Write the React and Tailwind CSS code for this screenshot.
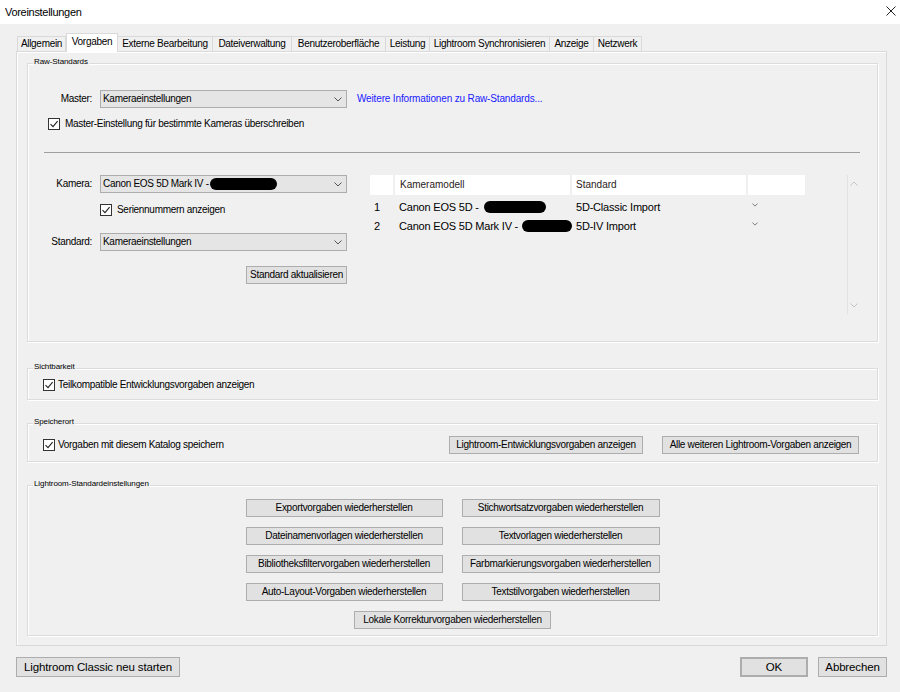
import React from "react";

const Chevron = ({ w = 8, h = 5 }) => (
  <svg width={w} height={h} viewBox="0 0 8 5" className="shrink-0">
    <path d="M0.5 0.5L4 4L7.5 0.5" fill="none" stroke="#555" strokeWidth="1" />
  </svg>
);

const Pill = ({ className }) => <span className={`inline-block h-[12px] shrink-0 rounded-full bg-black ${className}`} />;

const Select = ({ children, className = "" }) => (
  <div className={`flex h-[18px] w-[247px] items-center border border-[#adadad] bg-[#e5e5e5] pl-[2px] pr-[4px] ${className}`}>
    <div className="flex flex-1 items-center whitespace-nowrap">{children}</div>
    <Chevron />
  </div>
);

const Check = ({ children, className = "", gap = "ml-[5px]" }) => (
  <div className={`flex h-[12px] items-center ${className}`}>
    <div className="flex h-[12px] w-[12px] shrink-0 items-center justify-center border border-[#333] bg-white">
      <svg width="10" height="10" viewBox="0 0 10 10">
        <path d="M1.5 5.2L4 7.6L8.6 2.2" fill="none" stroke="#222" strokeWidth="1.1" />
      </svg>
    </div>
    <span className={`whitespace-nowrap ${gap}`}>{children}</span>
  </div>
);

const Btn = ({ children, className = "" }) => (
  <div className={`flex h-[18px] shrink-0 items-center justify-center whitespace-nowrap border border-[#adadad] bg-[#e1e1e1] ${className}`}>
    {children}
  </div>
);

const Group = ({ label, className = "", children }) => (
  <div className={`border border-[#dcdcdc] shadow-[inset_1px_1px_0_#fff,1px_1px_0_#fff] ${className}`}>
    <div className="-mt-[8px] ml-[5px] w-fit bg-[#f0f0f0] px-px text-[8px] leading-[12px] tracking-[-0.1px]">{label}</div>
    {children}
  </div>
);

const tabs = [
  ["Allgemein", "w-[49px]"],
  ["Vorgaben", "w-[52px]"],
  ["Externe Bearbeitung", "w-[95px]"],
  ["Dateiverwaltung", "w-[79px]"],
  ["Benutzeroberfläche", "w-[94px]"],
  ["Leistung", "w-[44px]"],
  ["Lightroom Synchronisieren", "w-[120px]"],
  ["Anzeige", "w-[44px]"],
  ["Netzwerk", "w-[48px]"],
];

const restore = [
  "Exportvorgaben wiederherstellen",
  "Stichwortsatzvorgaben wiederherstellen",
  "Dateinamenvorlagen wiederherstellen",
  "Textvorlagen wiederherstellen",
  "Bibliotheksfiltervorgaben wiederherstellen",
  "Farbmarkierungsvorgaben wiederherstellen",
  "Auto-Layout-Vorgaben wiederherstellen",
  "Textstilvorgaben wiederherstellen",
];

export default function App() {
  return (
    <div className="h-[692px] w-[900px] overflow-hidden bg-[#f0f0f0] font-['Liberation_Sans',Arial,sans-serif] text-[10px] leading-[12px] tracking-[-0.3px] text-black">
      {/* title bar */}
      <div className="flex h-[24px] items-center justify-between bg-white pl-[5px] pr-[4px]">
        <span className="text-[11px]">Voreinstellungen</span>
        <svg width="10" height="10" viewBox="0 0 10 10" className="mb-[2px]">
          <path d="M0.5 0.5L9.5 9.5M9.5 0.5L0.5 9.5" stroke="#222" strokeWidth="1" />
        </svg>
      </div>

      <div className="pl-[16px] pr-[13px] pt-[9px]">
        {/* tabs */}
        <div className="flex h-[18px] items-end pl-px">
          {tabs.map(([t, w]) =>
            t === "Vorgaben" ? (
              <div key={t} className={`relative z-10 -mb-px flex h-[19px] items-center justify-center whitespace-nowrap border border-b-0 border-[#d9d9d9] bg-white pb-[2px] ${w}`}>
                {t}
              </div>
            ) : (
              <div key={t} className={`flex h-[15px] items-center justify-center whitespace-nowrap border border-b-0 border-l-0 border-[#d9d9d9] first:border-l ${w}`}>
                {t}
              </div>
            )
          )}
        </div>

        {/* panel */}
        <div className="h-[595px] border border-[#d9d9d9] pl-[10px] pr-[8px] pt-[11px] shadow-[inset_1px_1px_0_#fff]">
          <Group label="Raw-Standards" className="h-[279px]">
            <div className="mt-[22px] flex items-center">
              <div className="w-[64px] text-right">Master:</div>
              <Select className="ml-[8px]">Kameraeinstellungen</Select>
              <span className="ml-[10px] tracking-[-0.15px] text-[#1a1aff]">Weitere Informationen zu Raw-Standards...</span>
            </div>
            <Check className="ml-[20px] mt-[10px]">Master-Einstellung für bestimmte Kameras überschreiben</Check>
            <div className="ml-[16px] mr-[17px] mt-[22px] h-px bg-[#a0a0a0]" />

            <div className="mt-[22px] flex">
              <div className="flex w-[319px] flex-col">
                <div className="flex items-center">
                  <div className="w-[64px] text-right">Kamera:</div>
                  <Select className="ml-[8px]">
                    Canon EOS 5D Mark IV -<Pill className="ml-[1px] w-[67px]" />
                  </Select>
                </div>
                <Check className="ml-[72px] mt-[11px]">Seriennummern anzeigen</Check>
                <div className="mt-[17px] flex items-center">
                  <div className="w-[64px] text-right">Standard:</div>
                  <Select className="ml-[8px]">Kameraeinstellungen</Select>
                </div>
                <Btn className="ml-auto mt-[15px] w-[101px]">Standard aktualisieren</Btn>
              </div>

              {/* table */}
              <div className="ml-[23px] w-[435px]">
                <div className="flex h-[20px] gap-[2px] tracking-normal text-[#2a1a1a]">
                  <div className="w-[23px] bg-white" />
                  <div className="flex w-[175px] items-center bg-white pl-[5px]">Kameramodell</div>
                  <div className="flex w-[174px] items-center bg-white pl-[4px]">Standard</div>
                  <div className="flex-1 bg-white" />
                </div>
                <div className="mt-[2px] text-[11px] tracking-[-0.2px]">
                  <div className="flex h-[19px] items-center">
                    <div className="w-[25px] pl-[4px]">1</div>
                    <div className="flex w-[177px] items-center whitespace-nowrap pl-[4px]">
                      Canon EOS 5D -<Pill className="ml-[5px] w-[62px]" />
                    </div>
                    <div className="w-[176px] pl-[4px]">5D-Classic Import</div>
                    <div className="mb-[3px] pl-[4px]"><Chevron w={6} h={4} /></div>
                  </div>
                  <div className="flex h-[19px] items-center">
                    <div className="w-[25px] pl-[4px]">2</div>
                    <div className="flex w-[177px] items-center whitespace-nowrap pl-[4px]">
                      Canon EOS 5D Mark IV -<Pill className="ml-[4px] w-[50px]" />
                    </div>
                    <div className="relative w-[176px] pl-[4px]">5D-IV Import</div>
                    <div className="mb-[3px] pl-[4px]"><Chevron w={6} h={4} /></div>
                  </div>
                </div>
              </div>

              {/* scrollbar */}
              <div className="ml-[42px] flex h-[139px] w-[13px] flex-col items-center justify-between border-l border-[#e2e2e2] py-[6px]">
                <svg width="8" height="5" viewBox="0 0 8 5"><path d="M0.5 4.5L4 1L7.5 4.5" fill="none" stroke="#c4c4c4" /></svg>
                <svg width="8" height="5" viewBox="0 0 8 5"><path d="M0.5 0.5L4 4L7.5 0.5" fill="none" stroke="#c4c4c4" /></svg>
              </div>
            </div>
          </Group>

          <Group label="Sichtbarkeit" className="mt-[26px] h-[32px]">
            <Check className="ml-[15px] mt-[6px]" gap="ml-[3px]">Teilkompatible Entwicklungsvorgaben anzeigen</Check>
          </Group>

          <Group label="Speicherort" className="mt-[23px] h-[39px]">
            <div className="mt-[8px] flex items-center pr-[18px]">
              <Check className="ml-[15px]" gap="ml-[3px]">Vorgaben mit diesem Katalog speichern</Check>
              <Btn className="ml-auto w-[194px]">Lightroom-Entwicklungsvorgaben anzeigen</Btn>
              <Btn className="ml-[19px] w-[197px]">Alle weiteren Lightroom-Vorgaben anzeigen</Btn>
            </div>
          </Group>

          <Group label="Lightroom-Standardeinstellungen" className="mt-[23px] h-[151px]">
            <div className="mt-[9px] flex flex-col items-center">
              <div className="grid grid-cols-[197px_198px] gap-x-[19px] gap-y-[10px]">
                {restore.map((t) => (
                  <Btn key={t}>{t}</Btn>
                ))}
              </div>
              <Btn className="mt-[10px] w-[197px]">Lokale Korrekturvorgaben wiederherstellen</Btn>
            </div>
          </Group>
        </div>

        {/* footer */}
        <div className="mt-[11px] flex text-[11.5px] tracking-[-0.15px]">
          <Btn className="h-[20px] w-[164px]">Lightroom Classic neu starten</Btn>
          <Btn className="ml-auto h-[20px] w-[68px] border-2 border-[#0078d7]">OK</Btn>
          <Btn className="ml-[10px] h-[20px] w-[69px]">Abbrechen</Btn>
        </div>
      </div>
    </div>
  );
}
